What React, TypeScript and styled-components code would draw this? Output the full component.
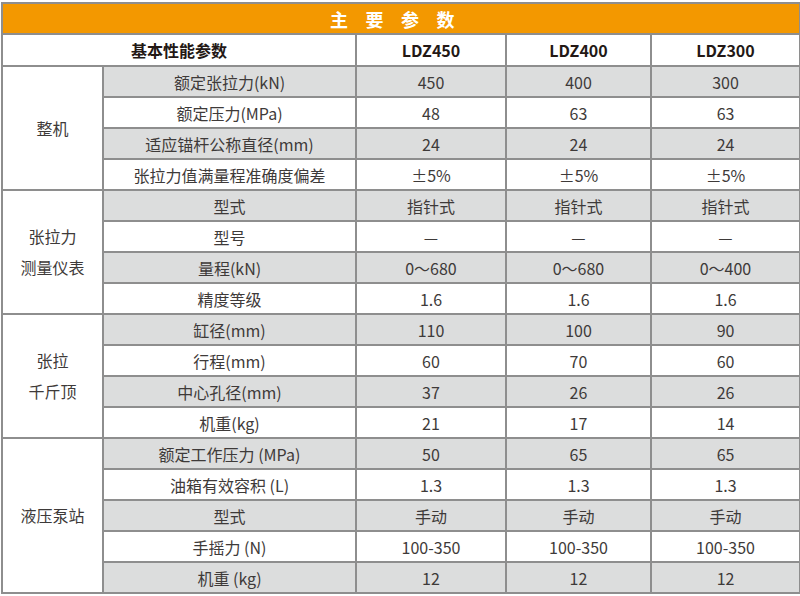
import React from "react";
import styled, { createGlobalStyle } from "styled-components";

const Global = createGlobalStyle`
  html, body { margin: 0; padding: 0; background: #ffffff; }
  body { font-family: "Noto Sans CJK SC", "Noto Sans", sans-serif; }
`;

const Page = styled.div`
  padding: 2px 1px 0 1px;
  width: 798px;
`;

const Table = styled.table`
  width: 798px;
  border-collapse: collapse;
  table-layout: fixed;
  border: 2px solid #8e8e8e;
  color: #3e3a39;
  font-size: 16px;
`;

const Col = styled.col<{ $w: number }>`
  width: ${(p) => p.$w}px;
`;

const TitleCell = styled.th`
  height: 29px;
  padding: 0;
  background: #f39800;
  color: #ffffff;
  font-size: 18px;
  font-weight: 700;
  letter-spacing: 17.5px;
  text-align: center;
  border: 2px solid #8e8e8e;
`;

const HeadCell = styled.th`
  height: 30px;
  padding: 0;
  background: #ffffff;
  color: #231815;
  font-size: 16px;
  font-weight: 700;
  text-align: center;
  border: 2px solid #8e8e8e;
`;

const GroupCell = styled.td`
  padding: 0;
  background: #ffffff;
  text-align: center;
  line-height: 31px;
  border: 2px solid #8e8e8e;
`;

const GroupLine = styled.div`
  display: block;
`;

const Cell = styled.td<{ $shade: boolean }>`
  height: 29px;
  padding: 0;
  background: ${(p) => (p.$shade ? "#dcdddd" : "#ffffff")};
  text-align: center;
  white-space: nowrap;
  border: 2px solid #8e8e8e;
`;

type Row = [string, string, string, string];
type Group = { label: string[]; rows: Row[] };

const colWidths = [101, 253, 150, 145, 149];

const groups: Group[] = [
  {
    label: ["整机"],
    rows: [
      ["额定张拉力(kN)", "450", "400", "300"],
      ["额定压力(MPa)", "48", "63", "63"],
      ["适应锚杆公称直径(mm)", "24", "24", "24"],
      ["张拉力值满量程准确度偏差", "±5%", "±5%", "±5%"],
    ],
  },
  {
    label: ["张拉力", "测量仪表"],
    rows: [
      ["型式", "指针式", "指针式", "指针式"],
      ["型号", "—", "—", "—"],
      ["量程(kN)", "0～680", "0～680", "0～400"],
      ["精度等级", "1.6", "1.6", "1.6"],
    ],
  },
  {
    label: ["张拉", "千斤顶"],
    rows: [
      ["缸径(mm)", "110", "100", "90"],
      ["行程(mm)", "60", "70", "60"],
      ["中心孔径(mm)", "37", "26", "26"],
      ["机重(kg)", "21", "17", "14"],
    ],
  },
  {
    label: ["液压泵站"],
    rows: [
      ["额定工作压力 (MPa)", "50", "65", "65"],
      ["油箱有效容积 (L)", "1.3", "1.3", "1.3"],
      ["型式", "手动", "手动", "手动"],
      ["手摇力 (N)", "100-350", "100-350", "100-350"],
      ["机重 (kg)", "12", "12", "12"],
    ],
  },
];

export default function App() {
  let idx = 0;
  return (
    <Page>
      <Global />
      <Table>
        <colgroup>
          {colWidths.map((w, i) => (
            <Col key={i} $w={w} />
          ))}
        </colgroup>
        <thead>
          <tr>
            <TitleCell colSpan={5}>主要参数</TitleCell>
          </tr>
          <tr>
            <HeadCell colSpan={2}>基本性能参数</HeadCell>
            <HeadCell>LDZ450</HeadCell>
            <HeadCell>LDZ400</HeadCell>
            <HeadCell>LDZ300</HeadCell>
          </tr>
        </thead>
        <tbody>
          {groups.map((g) =>
            g.rows.map((r, i) => {
              const shade = idx % 2 === 0;
              idx += 1;
              return (
                <tr key={`${g.label.join("")}-${i}`}>
                  {i === 0 && (
                    <GroupCell rowSpan={g.rows.length}>
                      {g.label.map((l) => (
                        <GroupLine key={l}>{l}</GroupLine>
                      ))}
                    </GroupCell>
                  )}
                  {r.map((c, j) => (
                    <Cell key={j} $shade={shade}>
                      {c}
                    </Cell>
                  ))}
                </tr>
              );
            })
          )}
        </tbody>
      </Table>
    </Page>
  );
}
